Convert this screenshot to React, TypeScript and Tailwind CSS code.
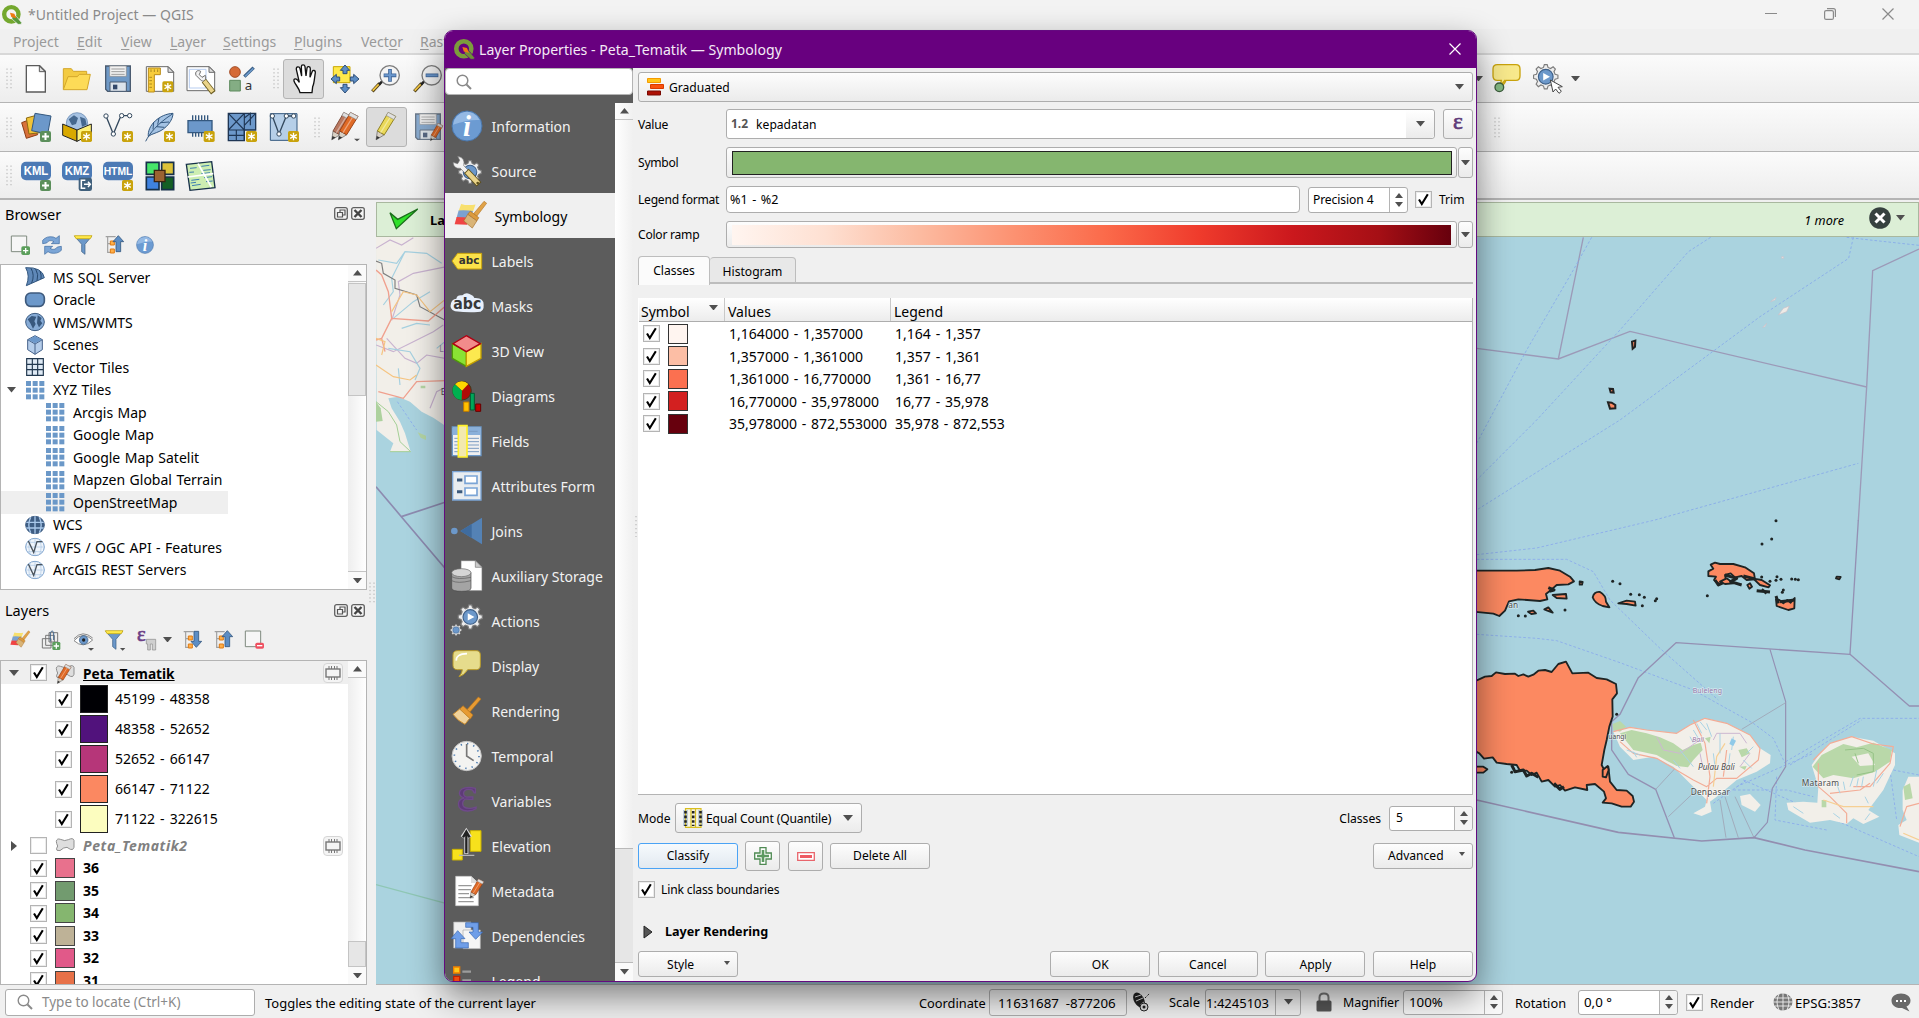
import React from "react";

type P = { children?: React.ReactNode; className?: string };

/* ---------- small shared pieces ---------- */

const Svg = ({ children, s = 30, v = 90 }: { children: React.ReactNode; s?: number; v?: number }) => (
  <svg width={s} height={s} viewBox={`0 0 ${v} ${v}`} className="shrink-0 overflow-visible">
    {children}
  </svg>
);

const Caret = ({ w = 8, up = false, className = "" }: { w?: number; up?: boolean; className?: string }) => (
  <svg width={w} height={w / 2 + 1} viewBox="0 0 8 5" preserveAspectRatio="none" className={`shrink-0 ${className}`}>
    <path d={up ? "M4 0L8 5H0z" : "M0 0H8L4 5z"} fill="#505050" />
  </svg>
);

const Check = ({ on = true, className = "" }: { on?: boolean; className?: string }) => (
  <span className={`flex h-[17px] w-[17px] shrink-0 items-center justify-center border border-[#b4b4b4] bg-white shadow-[inset_0_0_0_1px_#ececec] ${className}`}>
    {on && (
      <svg width="11" height="13" viewBox="0 0 11 13">
        <path d="M1 6.5L3.8 11 9.8 1.2" fill="none" stroke="#000" strokeWidth="2.1" />
      </svg>
    )}
  </span>
);

const Grip = ({ className = "" }: { className?: string }) => (
  <svg width="6" height="21" viewBox="0 0 6 21" className={`shrink-0 ${className}`}>
    <path d="M1 .5V21M5 .5V21" stroke="#b0b0b0" strokeDasharray="1.3 2.4" />
  </svg>
);

const Star = ({ x = 62, y = 62 }: { x?: number; y?: number }) => (
  <g transform={`translate(${x} ${y})`}>
    <rect x="-5" y="-5" width="33" height="33" rx="5" fill="#c9a30c" />
    <path d="M11.500 0V23M1.500 5.700L21.500 17.300M21.500 5.700L1.500 17.300" stroke="#fff" strokeWidth="4" />
  </g>
);

const Plus = ({ x = 62, y = 62 }: { x?: number; y?: number }) => (
  <g transform={`translate(${x} ${y})`}>
    <rect x="-5" y="-5" width="33" height="33" rx="6" fill="#5b8f5b" />
    <path d="M11.500 1V22M1 11.500H22" stroke="#fff" strokeWidth="6" />
  </g>
);

const QLogo = ({ s = 20, dim = false }: { s?: number; dim?: boolean }) => (
  <svg width={s} height={s} viewBox="0 0 60 60" className="shrink-0">
    <circle cx="28" cy="28" r="21.500" fill="none" stroke={dim ? "#7c9c3c" : "#74a82e"} strokeWidth="13" />
    <path d="M30 30L43 34L58 52V58H48L30 42z" fill={dim ? "#6f9136" : "#58983a"} stroke={dim ? "#680081" : "#f3f3f3"} strokeWidth="2" />
    <path d="M24 23L37 26L43 40L28 36z" fill="#ee7913" />
  </svg>
);

const Tip = () => (
  <>
    <path d="M4 82L26 58" stroke="#54431a" strokeWidth="10" />
    <path d="M5 80L24 60" stroke="#f5c945" strokeWidth="5" />
    <path d="M24 62L36 50" stroke="#222" strokeWidth="8" />
  </>
);

const Brush = () => (
  <>
    <path d="M22 12Q40 18 66 14L58 36L14 34z" fill="#f8e06e" />
    <path d="M14 32Q36 30 58 34L50 56L8 54z" fill="#7ba1d0" />
    <path d="M8 52Q28 52 46 54L40 76L2 74z" fill="#ef4444" />
    <path d="M60 42L92 4l8 6-32 42z" fill="#e0a247" stroke="#b5792a" strokeWidth="2" />
    <path d="M50 34l26 20-6 10-28-20z" fill="#dc9a3c" stroke="#a8702b" strokeWidth="2" />
    <path d="M42 44l28 20-14 22L30 64z" fill="#d9b477" stroke="#a8702b" strokeWidth="2" />
  </>
);

const Grid9 = () => (
  <svg width="20" height="20" viewBox="0 0 60 60" className="shrink-0">
    {[3, 23, 43].map((y) =>
      [3, 23, 43].map((x) => <rect key={`${x}-${y}`} x={x} y={y} width="15" height="15" fill="#6b98c8" />)
    )}
  </svg>
);

const Globe = ({ dark = false, v = false }: { dark?: boolean; v?: boolean }) => (
  <svg width="20" height="20" viewBox="0 0 60 60" className="shrink-0">
    <ellipse cx="30" cy="30" rx="28" ry="26" fill={dark ? "#3e5d83" : v ? "#f0f5fb" : "#86abd6"} stroke={v ? "#7ba1cc" : "#3e5d83"} strokeWidth="3" />
    {dark ? (
      <path d="M30 4V56M4 22H56M4 39H56M17 7Q6 30 17 53M43 7Q54 30 43 53" stroke="#a9c8ea" strokeWidth="4" fill="none" />
    ) : v ? (
      <>
        <path d="M30 4V56M4 30H56M8 44H52M8 16H52M17 7Q6 30 17 53M43 7Q54 30 43 53" stroke="#a9c5e4" strokeWidth="2" fill="none" />
        <path d="M10 12L26 46L36 14H52" stroke="#4a535c" strokeWidth="4" fill="none" />
      </>
    ) : (
      <path d="M8 22l12-10 14 2-6 14 4 8-8 14-8-16zM38 10l12 8-4 8 6 8-10 12-6-12z" fill="#38587e" />
    )}
  </svg>
);

/* ---------- toolbar icons ---------- */

const NewI = () => <Svg><path d="M16 5H56L73 22V84H16z" fill="#fff" stroke="#5a5a5a" strokeWidth="4" /><path d="M55 6V23H72z" fill="#ddd" stroke="#5a5a5a" strokeWidth="3" /></Svg>;
const OpenI = () => <Svg><path d="M4 76V14H28L34 22H74V32" fill="#f3cb42" stroke="#d3a72a" strokeWidth="3" /><path d="M4 77L18 38H46L52 31H85L75 77z" fill="#fddb57" stroke="#d3a72a" strokeWidth="3" /></Svg>;
const Floppy = () => (
  <>
    <path d="M8 6H82V82H14L8 76z" fill="#6f99c6" stroke="#4a5b70" strokeWidth="4" />
    <path d="M20 6H70V37H20z" fill="#f2f2f2" stroke="#8a8a8a" strokeWidth="2" />
    <path d="M25 15H65M25 23H65M25 31H65" stroke="#9c9c9c" strokeWidth="3" />
    <path d="M21 54H70V82H21z" fill="#dce3ea" stroke="#4a5b70" strokeWidth="3" />
    <path d="M30 62H43V76H30z" fill="#35496a" />
  </>
);
const SaveI = () => <Svg><Floppy /></Svg>;
const LayoutNewI = () => (
  <Svg>
    <path d="M4 8H70L86 24V82H4z" fill="#fff" stroke="#6a6a6a" strokeWidth="3" />
    <path d="M69 8V25H86z" fill="#ddd" stroke="#6a6a6a" strokeWidth="3" />
    <path d="M10 12H46V32H28V84H10z" fill="#f7cc3a" stroke="#b98b18" strokeWidth="3" />
    <path d="M18 16V24M28 16V24M38 16V24M13 40H21M13 50H21M13 60H21M13 70H21" stroke="#8a6914" strokeWidth="2" />
    <Star x={57} y={57} />
  </Svg>
);
const Wrench = () => (
  <>
    <path d="M30 34C26 24 34 16 44 22L40 32L48 40L58 34C62 46 56 54 46 50z" fill="#f2f2f2" stroke="#6d6d6d" strokeWidth="3" />
    <path d="M54 50L82 86" stroke="#6b5c20" strokeWidth="17" />
    <path d="M55 51L80 83" stroke="#ead48a" strokeWidth="12" />
  </>
);
const LayoutMgrI = () => (
  <Svg>
    <path d="M3 8H70L86 24V80H3z" fill="#fff" stroke="#6a6a6a" strokeWidth="3" />
    <path d="M69 8V25H86z" fill="#ddd" stroke="#6a6a6a" strokeWidth="3" />
    <path d="M10 16H60V72H10z" fill="none" stroke="#b7cdf0" strokeWidth="3" />
    <Wrench />
  </Svg>
);
const StyleI = () => (
  <Svg>
    <circle cx="24" cy="24" r="16" fill="#d56a36" stroke="#a34a22" strokeWidth="3" />
    <path d="M52 38L80 11" stroke="#34587f" strokeWidth="10" />
    <path d="M54 37L79 13" stroke="#6b98c8" strokeWidth="5" />
    <path d="M8 49H40V81H8z" fill="#84ad84" stroke="#5d8a5d" strokeWidth="3" />
    <text x="53" y="78" fontSize="40" fontFamily="Noto Sans" fill="#333">a</text>
  </Svg>
);
const HandI = () => (
  <Svg>
    <path d="M33 86C31 72 18 62 15 51C13 43 22 42 28 51L31 55L22 16C21 7 31 6 33 14L38 36L37 8C37 1 47 1 48 8L51 36L54 12C55 6 64 7 64 14L63 40L70 22C72 17 80 19 79 26C76 44 76 58 71 68L69 86z" fill="#fff" stroke="#111" strokeWidth="4" />
  </Svg>
);
const A4 = "M0 -42L-14 -26H-6V-16H6V-26H14z";
const PanSelI = () => (
  <Svg>
    <path d="M10 8H60V56H10z" fill="#ffe94a" stroke="#c9a800" strokeWidth="3" />
    {[0, 90, 180, 270].map((r) => (
      <path key={r} d={A4} transform={`translate(45 45) rotate(${r})`} fill="#5c8dc4" stroke="#2f4f78" strokeWidth="3" />
    ))}
  </Svg>
);
const ZoomI = ({ plus = false }: { plus?: boolean }) => (
  <Svg>
    <Tip />
    <circle cx="56" cy="34" r="29" fill="#f4f4f4" stroke="#7d7d7d" strokeWidth="4" />
    <path d={plus ? "M38 34H76M57 15V53" : "M38 34H76"} stroke="#3f6597" strokeWidth="11" />
    <path d={plus ? "M40 34H74M57 17V51" : "M40 34H74"} stroke="#6a97cd" strokeWidth="6" />
  </Svg>
);
const AddLayerI = () => (
  <Svg>
    <path d="M2 32L28 22L50 68L16 79z" fill="#d8713a" stroke="#8c3d15" strokeWidth="3" />
    <path d="M16 18L46 10L58 62L24 66z" fill="#f1c338" stroke="#8c6a10" strokeWidth="3" />
    <path d="M42 4L90 12L80 66L32 56z" fill="#6c98ca" stroke="#34587f" strokeWidth="3" />
    <Plus />
  </Svg>
);
const PackI = () => (
  <Svg>
    <circle cx="45" cy="34" r="32" fill="#a6c2e2" stroke="#5a7faa" strokeWidth="2" />
    <path d="M20 22L36 10L48 18L42 36L30 40zM54 14L70 20L74 38L60 44z" fill="#45688f" />
    <path d="M2 36L45 54V88L2 70z" fill="#d9a900" stroke="#222" strokeWidth="3" />
    <path d="M45 54L88 36V66L45 88z" fill="#fff27a" stroke="#222" strokeWidth="3" />
    <Star />
  </Svg>
);
const VShape = ({ box = false }: { box?: boolean }) => (
  <Svg>
    {box && <path d="M4 5H84V85H4z" fill="#b6cfe8" stroke="#34587f" strokeWidth="3" />}
    <path d={box ? "M10 12L30 66L52 12H74" : "M9 12L31 66L54 11H80"} fill="none" stroke="#34495e" strokeWidth="4" />
    {(box ? [[10, 12], [30, 66], [52, 12], [74, 12]] : [[9, 12], [31, 66], [56, 11], [80, 11]]).map(([x, y]) => (
      <circle key={`${x}-${y}`} cx={x} cy={y} r="6.500" fill="#fff" stroke="#34495e" strokeWidth="3" />
    ))}
    <Star />
  </Svg>
);
const FeatherI = () => (
  <Svg>
    <path d="M10 74C6 40 44 6 84 4C84 24 64 52 34 62C24 66 16 68 10 74z" fill="#a4c3e4" stroke="#34587f" strokeWidth="3" />
    <path d="M2 88C14 64 36 36 82 6M24 52L26 30M38 38L42 18M34 44L58 46M46 32L72 30" stroke="#34587f" strokeWidth="3" fill="none" />
    <Star />
  </Svg>
);
const Chip = () => (
  <Svg>
    <path d="M20 10V26M29 10V26M38 10V26M47 10V26M56 10V26M65 10V26M20 60V74M29 60V74M38 60V74M47 60V74" stroke="#34587f" strokeWidth="4" />
    <path d="M6 26H78V62H6z" fill="#6c98ca" stroke="#34587f" strokeWidth="4" />
    <Star x={58} />
  </Svg>
);
const MeshI = () => (
  <Svg>
    <path d="M4 4H86V54H52V86H4z" fill="#6c98ca" stroke="#1f3654" strokeWidth="4" />
    <path d="M4 4L52 54M52 4L4 54M52 4V86M86 4L52 40M4 54H52M52 18L70 4V40M4 70H52M28 54V86" stroke="#1f3654" strokeWidth="3.500" fill="none" />
    <Star />
  </Svg>
);
const Pencil = ({ c, d, x = 0, y = 0, k = 1 }: { c: string; d: string; x?: number; y?: number; k?: number }) => (
  <g transform={`translate(${x} ${y}) scale(${k})`}>
    <path d="M18 62L14 90L40 74z" fill="#d8d0c4" stroke="#555" strokeWidth="2" />
    <path d="M16 78L14 90L26 83z" fill="#333" />
    <path d="M18 62L52 4L76 16L40 74z" fill={c} stroke={d} strokeWidth="3" />
    <path d="M28 68L64 10" stroke="#fff" strokeOpacity=".4" strokeWidth="4" />
    <path d="M46 13L52 3L76 16L70 26z" fill="#e0e0e0" stroke="#8a8a8a" strokeWidth="2" />
  </g>
);
const PencilsI = () => <Svg><Pencil c="#b97860" d="#7d4a38" x={-8} y={-2} k={0.95} /><Pencil c="#e06a26" d="#974014" x={12} y={-2} k={0.95} /><path d="M72 80H90L81 88z" fill="#505050" /></Svg>;
const EditI = () => <Svg><Pencil c="#ead95a" d="#8c7c1c" x={2} y={-2} k={0.95} /></Svg>;
const SaveEditI = () => <Svg><g opacity=".8"><Floppy /></g><Pencil c="#e06a26" d="#974014" x={44} y={32} k={0.6} /></Svg>;
const TagI = ({ t, b }: { t: string; b: React.ReactNode }) => (
  <Svg>
    <rect x="0" y="2" width="90" height="56" rx="15" fill="#4c7ab5" />
    <text x="45" y="42" fontSize={t.length > 3 ? 33 : 36} textLength={t.length > 3 ? 86 : 74} lengthAdjust="spacingAndGlyphs" textAnchor="middle" fontWeight="bold" fontFamily="Liberation Sans" fill="#fff">{t}</text>
    {b}
  </Svg>
);
const ExportBadge = () => (
  <g>
    <rect x="50" y="50" width="40" height="40" rx="7" fill="#40607c" />
    <path d="M70 58H58V82H70M66 70H84M78 62L85 70L78 78" stroke="#fff" strokeWidth="4.500" fill="none" />
  </g>
);
const SquaresI = () => (
  <Svg>
    <path d="M4 4H42V40H4z" fill="#46e56a" stroke="#16304a" strokeWidth="5" />
    <path d="M50 4H86V40H50z" fill="#dcc238" stroke="#16304a" strokeWidth="5" />
    <path d="M4 48H42V86H4z" fill="#3f82e0" stroke="#16304a" strokeWidth="5" />
    <path d="M50 48H86V86H50z" fill="#145f25" stroke="#16304a" strokeWidth="5" />
    <path d="M28 28H60V62H28z" fill="#9a6232" stroke="#3a2412" strokeWidth="4" />
  </Svg>
);
const MapI = () => (
  <Svg>
    <path d="M1 10L77 2L87 80L12 88z" fill="#cdeeb2" stroke="#16304a" strokeWidth="4" />
    <path d="M12 22L32 20M46 16L70 13M10 34L24 33M52 28L74 26M16 58L40 55M54 50L78 47M18 74L44 70M60 62L80 60M14 66L30 64M46 38L72 35" stroke="#3f7fb0" strokeWidth="3" />
    <path d="M5 48L82 38M36 8L76 78" stroke="#fff" strokeWidth="5" />
  </Svg>
);
const gearPath = "M40 2H50L53 12L62 16L71 10L79 18L74 27L78 36L88 39V51L78 54L74 62L79 71L71 80L62 74L53 78L50 88H40L37 78L28 74L19 80L11 71L16 62L12 54L2 51V39L12 36L16 27L11 18L19 10L28 16L37 12z";
const Gear = ({ x = 0, y = 0, k = 1, play = true }: { x?: number; y?: number; k?: number; play?: boolean }) => (
  <g transform={`translate(${x} ${y}) scale(${k})`}>
    <path d={gearPath} fill="#ededed" stroke="#7c7c7c" strokeWidth="4" />
    <circle cx="45" cy="45" r="26" fill="#6c98ca" stroke="#3d5f88" strokeWidth="4" />
    {play && <path d="M36 32L60 45L36 58z" fill="#fff" />}
  </g>
);
const Bubble = () => <path d="M16 2H72Q84 2 84 15V36Q84 49 72 49H42Q36 66 20 70Q28 60 28 49H16Q3 49 3 36V15Q3 2 16 2z" fill="#f8e98c" stroke="#c9a30c" strokeWidth="4" />;

/* ---------- panel icons ---------- */

const RefreshI = () => <Svg s={20} v={60}><path d="M2 26V16Q14 2 34 6L42 10L52 2V26H28L36 20Q22 12 14 24z" fill="#7ba5d6" stroke="#3a689e" strokeWidth="2" /><path d="M58 34V46Q46 58 26 54L18 50L8 58V34H32L24 40Q38 48 46 36z" fill="#7ba5d6" stroke="#3a689e" strokeWidth="2" /></Svg>;
const FilterI = ({ caret = false }: { caret?: boolean }) => <Svg s={20} v={60}><path d="M5 4H56L36 28V58L26 50V28z" fill="#6c98ca" stroke="#34587f" strokeWidth="2" /><path d="M4 2H57L52 11H9z" fill="#ffe94a" stroke="#c9a800" strokeWidth="2" />{caret && <path d="M48 54H64L56 62z" fill="#505050" />}</Svg>;
const CollapseI = ({ down = false }: { down?: boolean }) => (
  <Svg s={20} v={60}>
    <path d="M2 5H32M8 5V52H20M8 26H20" stroke="#a0a0a0" strokeWidth="3.500" fill="none" />
    <path d="M16 18H28V30H16zM16 42H28V54H16z" fill="#ffb04a" stroke="#e07b12" strokeWidth="3" />
    <path d="M40 2L56 20H47V50H33V20H24z" transform={down ? "rotate(180 40 27)" : ""} fill="#5c8dc4" stroke="#34587f" strokeWidth="2.500" />
  </Svg>
);
const InfoI = ({ s = 18 }: { s?: number }) => (
  <Svg s={s} v={96}>
    <circle cx="48" cy="48" r="45" fill="#6c9bd2" stroke="#4a76aa" strokeWidth="3" />
    <path d="M6 44A42 42 0 0 1 86 30Q50 28 6 44z" fill="#9fc0e8" opacity=".8" />
    <text x="48" y="78" fontSize="86" textAnchor="middle" fontStyle="italic" fontWeight="bold" fontFamily="Liberation Serif" fill="#fff">i</text>
  </Svg>
);
const SquareBadge = ({ minus = false }: { minus?: boolean }) => (
  <Svg s={20} v={60}>
    <path d="M4 3H50V50H4z" fill="#f6f6f6" stroke="#7f8a7f" strokeWidth="3" />
    {minus ? <><rect x="34" y="38" width="26" height="18" rx="5" fill="#ef5060" /><path d="M39 47H55" stroke="#fff" strokeWidth="4" /></> : <><rect x="34" y="34" width="26" height="26" rx="5" fill="#5b9f5b" /><path d="M39 47H55M47 39V55" stroke="#fff" strokeWidth="4" /></>}
  </Svg>
);
const ChipButton = () => (
  <span className="flex h-5 w-5 shrink-0 items-center justify-center rounded-sm border border-[#d6d6d6] bg-[#f4f4f4]">
    <svg width="16" height="14" viewBox="0 0 16 14">
      <path d="M4 0V14M6.500 0V14M9.500 0V14M12 0V14" stroke="#777" />
      <rect x="1" y="3" width="14" height="8" fill="#f4f4f4" stroke="#777" strokeWidth="1.400" />
    </svg>
  </span>
);
const DockButtons = () => (
  <span className="flex gap-[3px]">
    <svg width="14" height="13" viewBox="0 0 14 13"><rect x=".7" y=".7" width="12.600" height="11.600" rx="2" fill="#f5f5f5" stroke="#5f5f5f" strokeWidth="1.300" /><path d="M3.500 5.500H8.500V10H3.500zM6 5V3H11V8H9" fill="none" stroke="#555" strokeWidth="1.200" /></svg>
    <svg width="14" height="13" viewBox="0 0 14 13"><rect x=".7" y=".7" width="12.600" height="11.600" rx="2" fill="#f5f5f5" stroke="#5f5f5f" strokeWidth="1.300" /><path d="M3.500 3L10.500 10M10.500 3L3.500 10" stroke="#444" strokeWidth="2.400" /></svg>
  </span>
);

/* ---------- map ---------- */

const THIRD = "scale(.33333)";
const dots = [
  [458, 184], [480, 191], [512, 223], [538, 224], [553, 232], [547, 257], [175, 287], [196, 288], [315, 270], [742, 227],
  [906, 72], [935, 57], [948, 2], [905, 171], [930, 184], [948, 181], [951, 170], [963, 178], [970, 210], [967, 217], [995, 177], [1006, 178], [1015, 179], [470, 583], [590, 236], [586, 242], [155, 757],
];
const MapCanvas = () => (
  <svg viewBox="376 237 1543 747" preserveAspectRatio="none" className="min-h-0 w-full flex-1 bg-[#aad3df]">
    <g transform={`translate(0 195) ${THIRD}`}>
      <path d="M1128 126H1340V695L1300 668L1265 650L1230 620L1195 605L1165 610L1175 640L1200 680L1215 715L1232 770H1170L1180 745L1130 705z" fill="#f2efe9" />
      <path d="M1128 620L1142 640L1148 678L1128 680z" fill="#add19e" />
      <path d="M1253 712L1278 722V735L1262 728zM1262 572h14v8h-14z" fill="#b5d6a5" />
      <path d="M1128 160L1170 135L1205 150L1240 128M1175 376L1200 300L1195 260L1240 235L1340 215M1128 450L1180 470L1240 440L1300 410L1330 390M1160 430L1215 490L1250 505L1280 480L1335 490M1290 640L1310 590L1340 575" fill="none" stroke="#c9b3d0" strokeWidth="3.500" />
      <path d="M1135 195L1190 205L1215 170L1280 175L1325 205M1215 170L1175 250L1180 290L1150 330M1180 370L1240 320L1290 290M1205 400L1250 385L1290 390M1165 460L1230 470L1260 520L1245 555M1195 520L1200 570M1310 460L1335 440" fill="none" stroke="#a5d0e0" strokeWidth="3.500" />
      <path d="M1128 198L1145 205L1150 235L1185 255V280L1250 300L1260 335L1340 378" fill="none" stroke="#7f7f7f" strokeWidth="3.500" />
      <path d="M1128 225L1145 240L1165 290L1175 370L1285 378L1340 330M1175 370L1145 430L1128 435M1135 590L1210 610L1250 560L1340 557M1145 430L1155 470" fill="none" stroke="#f0a08e" strokeWidth="4" />
      <path d="M1128 510L1180 545L1230 555L1250 540M1175 350L1210 290L1250 300L1290 350L1340 310M1128 430L1155 440L1145 480" fill="none" stroke="#f5c481" strokeWidth="3.500" />
      <path d="M1128 620L1165 650L1190 690L1200 740L1232 770H1170" fill="none" stroke="#a3cf95" strokeWidth="3" />
      <path d="M1192 620L1250 705" stroke="#8fb2ea" strokeWidth="3" strokeDasharray="8 6" />
      <path d="M1128 875L1204 965L1335 1120M1204 965L1335 922" fill="none" stroke="#8d8bb0" strokeWidth="5" />
      <path d="M1128 2069L1340 2126" stroke="#8fc7b4" strokeWidth="4" />
      <text x="1318" y="470" fontSize="26" fontFamily="Noto Sans" fill="#9a86a8">L</text>
      <text x="1322" y="600" fontSize="26" fontFamily="Noto Sans" fill="#555">E</text>
    </g>
    <g transform={`translate(1460 0) ${THIRD}`} fill="none">
      <path d="M370 712L295 1077M50 1045L295 1077L510 994L1220 1161M1377 747L1238 812L1220 1161L1195 1562" stroke="#9c9ab8" strokeWidth="4" />
      <path d="M395 712L340 810L200 1050L50 1330M752 712L685 755L480 990L230 1260L50 1440M1180 712L1166 775L900 950L480 1260L50 1530M1160 712L1230 720L1377 736M585 1560L1195 1390" stroke="#8cb0e8" strokeWidth="3" strokeDasharray="8 6" />
      <path d="M955 945L970 925L988 918L980 935zM932 905L948 892L945 900zM908 982L920 970L915 980zM965 770h6v5h-6z" fill="#eeebe6" stroke="#c7c0c8" strokeWidth="2" />
      <path d="M516 1025L526 1022L525 1040L518 1046zM449 1166L459 1167L461 1178L452 1177zM444 1207L455 1208L466 1215V1225L450 1226z" fill="#fc8961" stroke="#222" strokeWidth="6" />
    </g>
    <g transform={`translate(1460 520) ${THIRD}`} fill="none" strokeLinejoin="round">
      <path d="M50 104L230 84L585 0M50 118H320L400 155L450 240L600 385L775 540M50 343L230 355L290 362L480 428L700 510L880 610L940 655L975 730M977 725L1200 595H1377M990 735L1205 600M830 800L977 735L1060 700M850 780L1377 1010M820 810H980L1060 830M950 770L945 900L1100 930M1290 750L1310 900M1300 750L1377 765M760 850L860 780" stroke="#8fb0ea" strokeWidth="3" strokeDasharray="8 6" />
      <path d="M1195 0L1170 403L1348 558H1377M1170 403L648 368L535 473L480 583L455 605V690L505 763L587 808L643 953" stroke="#9490b3" strokeWidth="4" />
      <path d="M930 388L977 545V740L937 805L922 907L882 953" stroke="#9490b3" strokeWidth="3.500" />
      <path d="M977 548L845 628M587 808L650 740M625 890L720 800M780 840L798 953M795 830L835 953M825 830L882 953" stroke="#9fa3b4" strokeWidth="2.500" />
      <path d="M50 840L475 937L725 963L882 953L1035 990L1377 1055" stroke="#938eb0" strokeWidth="5" />
      {/* Bali, Lombok and Sumbawa */}
      <path d="M460 635L510 622L560 630L650 640L690 615L735 595L800 610L870 645L900 685L932 705L930 730L890 755L830 780L770 830L750 845L755 875L725 888L700 880L735 860L740 840L700 800L640 740L580 710L520 720L480 680z" fill="#f2efe9" />
      <path d="M840 828L870 822L902 855L885 875L845 855z" fill="#f2efe9" />
      <path d="M1055 735L1080 700L1110 670L1175 650L1240 662L1305 700V735L1270 810L1225 870L1258 890L1210 912L1180 895L1160 912L1110 900L1050 908L985 870L980 848L1030 845L1072 848L1075 800z" fill="#f2efe9" />
      <path d="M1377 770H1345L1328 810V870L1340 900L1315 915L1318 945L1377 968z" fill="#f2efe9" />
      <path d="M458 612L480 603L498 620L480 635L460 630zM480 640L515 630L560 640L600 652L640 670L668 690L700 675L722 668L728 690L700 720L684 742L650 738L620 722L590 705L520 690zM735 655L752 650L748 670zM835 690L860 685L870 700L845 712zM838 740L860 738L855 750z" fill="#b9d8a9" />
      <path d="M1058 740L1085 705L1150 672L1190 682L1240 668L1295 690L1290 725L1245 755L1180 775L1120 765L1090 775zM1330 800L1350 790L1358 835L1335 840zM1085 840h14v22h-14z" fill="#b9d8a9" />
      <path d="M1175 710L1225 700L1245 735L1200 738z" fill="#f2efe9" />
      <path d="M460 635L510 622L560 630L650 640L690 615L735 595L800 610L870 645L900 685L895 720L830 775L770 775L740 800L700 780L590 715L520 700L480 665M700 600L735 670L750 770L740 850M800 690L790 770M1060 720L1110 670L1175 650L1240 672L1300 680L1290 730L1230 800L1180 800M1075 730V800L1110 830L1160 880V910M1110 820L1200 810L1230 790M1377 850L1340 860L1320 920" stroke="#f3ac96" strokeWidth="3.500" />
      <path d="M760 800L770 710L795 670M1090 840L1150 860L1240 860M1330 940L1377 960" stroke="#f6cf93" strokeWidth="3.500" />
      <path d="M590 650L610 690L660 700L720 660M760 660L770 640L840 640L860 670M720 700L730 750M840 740L870 700" stroke="#cdb7d2" strokeWidth="3" />
      <path d="M710 610L725 640M740 610L755 650M720 605L740 630M700 630L715 655M690 650L700 670M780 640V700M810 700L805 740M850 720L875 745M880 680L860 700M660 690L700 740M640 720L660 745M500 690L540 705M520 695L530 712M760 700L765 740M820 650L815 690M1180 770L1170 800M1195 775L1190 800M1210 770L1205 800M1250 750L1240 800M1130 790L1140 820M1150 785L1155 810M1270 760L1250 790M1215 830L1225 850M1000 860L1030 880M1120 880L1140 895M1230 880L1215 900" stroke="#a9d3e4" strokeWidth="3" />
      <path d="M815 655L828 662L820 678L808 672z" fill="#8fc9e8" />
      <path d="M1155 690L1210 685L1240 700V755L1190 765M1185 700L1195 730" stroke="#95c386" strokeWidth="3" />
      {/* thematic polygons */}
      <g fill="#fc8961" stroke="#1e2424" strokeWidth="5.500">
        <path d="M40 152H105L170 152L225 150L265 144L300 152L330 170L342 184L325 193L290 195L275 208L258 222L262 238L240 243L175 238L147 244L135 272L118 288L100 281L40 275z" />
        <path d="M40 486L62 476L75 470L95 468L108 457L135 462L165 461L175 468L190 463L205 470L220 464L235 452L255 450L275 456L295 432L318 425L337 460L385 458L410 474L440 478L468 492L471 520L457 538L458 590L448 620L440 660L433 690L425 735L438 760L445 740L450 785L470 810L500 812L518 828L522 845L512 860L485 860L455 850L428 848L438 835L432 815L405 792L380 795L382 810L345 802L315 812L300 795L285 800L265 780L245 785L230 758L215 765L200 752L180 752L170 735L140 732L110 728L98 712L72 716L58 700L40 690z" />
        <path d="M40 740H70L82 748L70 758H40zM428 770V750L443 738L446 750L438 772z" />
        <path d="M278 225L318 222L320 236L290 234zM398 232Q402 214 420 216Q438 226 438 245L448 262L428 258Q404 250 398 232zM475 250L500 242L525 245L527 257L500 252zM253 268L265 262L278 278L262 272zM204 275L220 272L228 280L214 282zM359 184L368 186L366 194H359zM1130 170L1142 171L1138 178L1128 175z" />
        <path d="M752 134L765 128L780 132L820 132L855 142L882 160L885 178L860 180L845 168L825 172L812 160L795 165L798 180L778 192L762 180L768 170L745 168V154L760 146z" />
        <path d="M780 185L800 175L820 190L795 192zM880 176L905 180L930 196L926 202L900 195zM862 195L870 190L876 200L868 206zM948 238L958 240L970 250L982 240L992 248L1004 234L1003 265L985 270L950 258z" />
      </g>
      <path d="M765 180L775 195L790 188M795 165L830 175L812 185L845 195M850 168L882 176M890 212L930 216M905 208L920 220M948 228L955 250M960 245L1004 240M265 203L282 210L268 214M155 735L165 755L190 750L200 768L215 760L235 772M282 790L300 808L312 800" stroke="#1e2424" strokeWidth="9" />
      {dots.map(([x, y], i) => <circle key={i} cx={x} cy={y} r="4.500" fill="#1e2424" />)}
      <g fontFamily="Noto Sans" fontSize="25" fill="#4d4d4d" paintOrder="stroke" stroke="#fff" strokeOpacity=".5" strokeWidth="4">
        <text x="698" y="519" fontSize="21" fill="#9878a8" textLength="88">Buleleng</text>
        <text x="696" y="666" fontSize="21" fill="#9878a8" fontStyle="italic">Bali</text>
        <text x="714" y="749" fontStyle="italic" textLength="110">Pulau Bali</text>
        <text x="692" y="824" textLength="118">Denpasar</text>
        <text x="1025" y="798" textLength="112">Mataram</text>
        <text x="445" y="656" fontSize="20">uangi</text>
        <text x="145" y="263">an</text>
      </g>
    </g>
  </svg>
);

/* ---------- docks ---------- */

const ScrollBar = ({ children }: P) => (
  <div className="flex w-[18px] shrink-0 flex-col bg-gradient-to-r from-[#eeeeee] to-white">
    <div className="flex h-[17px] items-center justify-center border-b border-[#c4c4c4] bg-[#fafafa]"><Caret up w={9} /></div>
    {children}
    <div className="flex h-[18px] items-center justify-center border-t border-[#c4c4c4] bg-[#fafafa]"><Caret w={9} /></div>
  </div>
);

const TreeRow = ({ icon, t, lvl = 0, sel = false, open = false }: { icon: React.ReactNode; t: string; lvl?: number; sel?: boolean; open?: boolean }) => (
  <div className={`flex h-[22.5px] shrink-0 items-center ${sel ? "w-[227px] bg-[#efefef]" : ""}`}>
    <span className={`flex shrink-0 items-center justify-center ${lvl ? "w-[44px]" : "w-6"}`}>{open && <Caret w={9} className="mr-1" />}</span>
    {icon}
    <span className="ml-[8px] pt-px whitespace-nowrap [word-spacing:0.8px]">{t}</span>
  </div>
);

const Browser = () => (
  <>
    <div className="flex h-[27px] items-center justify-between pr-[2px] pl-[5px] text-[14.500px]"><span>Browser</span><DockButtons /></div>
    <div className="flex h-[37px] items-center gap-[11.500px] pb-[2px] pl-[10px]"><SquareBadge /><RefreshI /><FilterI /><CollapseI /><InfoI /></div>
    <div className="flex h-[326px] border border-[#b4b4b4] bg-white">
      <div className="flex flex-1 flex-col overflow-hidden pt-px">
        <TreeRow t="MS SQL Server" icon={<Svg s={20} v={60}><path d="M2 2Q52 0 58 32L4 56Q16 26 2 2z" fill="#5f88b8" stroke="#34587f" strokeWidth="3" /><path d="M18 4Q30 24 20 48M32 6Q42 22 36 42M45 12Q50 24 48 36" stroke="#284a70" strokeWidth="3" fill="none" /></Svg>} />
        <TreeRow t="Oracle" icon={<Svg s={20} v={60}><rect x="2" y="9" width="56" height="40" rx="15" fill="#6c98ca" stroke="#3e5a7d" strokeWidth="5" /></Svg>} />
        <TreeRow t="WMS/WMTS" icon={<Globe />} />
        <TreeRow t="Scenes" icon={<Svg s={20} v={60}><path d="M30 2L52 14V44L30 58L8 44V14z" fill="#b5cdea" stroke="#46628a" strokeWidth="3" /><path d="M8 14L30 27L52 14M30 27V58" stroke="#46628a" strokeWidth="3" fill="none" /><path d="M30 3L50 14L30 25L10 14z" fill="#6c98ca" /></Svg>} />
        <TreeRow t="Vector Tiles" icon={<Svg s={20} v={60}><path d="M5 5H55V55H5zM5 22H55M5 38H55M22 5V55M38 5V55" fill="#dfeaf5" stroke="#22384f" strokeWidth="3.500" /></Svg>} />
        <TreeRow t="XYZ Tiles" icon={<Grid9 />} open />
        {["Arcgis Map", "Google Map", "Google Map Satelit", "Mapzen Global Terrain", "OpenStreetMap"].map((t) => (
          <TreeRow key={t} t={t} lvl={1} icon={<Grid9 />} sel={t === "OpenStreetMap"} />
        ))}
        <TreeRow t="WCS" icon={<Globe dark />} />
        <TreeRow t="WFS / OGC API - Features" icon={<Globe v />} />
        <TreeRow t="ArcGIS REST Servers" icon={<Globe v />} />
      </div>
      <ScrollBar>
        <div className="mt-px h-[113px] border border-[#c4c4c4] bg-[#e6e6e6]" />
        <div className="flex-1" />
      </ScrollBar>
    </div>
  </>
);

const ranges = [
  ["#000004", "45199 - 48358"], ["#51127c", "48358 - 52652"], ["#b63679", "52652 - 66147"], ["#fb8861", "66147 - 71122"], ["#fcfdbf", "71122 - 322615"],
];
const flat = [["#e8718d", "36"], ["#729b6f", "35"], ["#85b66f", "34"], ["#beb297", "33"], ["#e15989", "32"], ["#e77148", "31"]];

const Poly = () => <path d="M4 16Q6 6 16 10Q30 17 40 11Q54 4 57 13V34Q54 44 46 40Q36 30 26 36Q14 48 6 43Q2 40 8 30Q4 22 4 16z" fill="#dedede" stroke="#8f8f8f" strokeWidth="3" />;

const Layers = () => (
  <>
    <div className="mt-[7px] flex h-[26px] items-center justify-between pr-[2px] pl-[5px] text-[14.500px]"><span>Layers</span><DockButtons /></div>
    <div className="flex h-[37px] items-center pl-[10px] pb-1">
      <Svg s={20} v={100}><Brush /></Svg>
      <span className="ml-[11px]"><Svg s={20} v={60}><path d="M4 26H30V54H4zM14 16H40V46H14zM24 8H50V36H24z" fill="#eee" stroke="#777" strokeWidth="3" /><path d="M28 34V8Q34 -2 38 8V30" stroke="#44688f" strokeWidth="3" fill="none" /><rect x="34" y="36" width="24" height="24" rx="4" fill="#5b9f5b" /><path d="M38 48H54M46 40V56" stroke="#fff" strokeWidth="4" /></Svg></span>
      <span className="ml-[13px]"><Svg s={20} v={60}><path d="M0 32Q26 2 56 30Q28 58 0 32z" fill="#fff" stroke="#8a8a8a" strokeWidth="3" /><circle cx="29" cy="30" r="13" fill="#6c98ca" stroke="#34587f" strokeWidth="2" /><circle cx="29" cy="30" r="5" fill="#222" /><path d="M0 26Q26 -2 56 24" stroke="#8a8a8a" strokeWidth="3" fill="none" /><path d="M42 54H60L51 62z" fill="#505050" /></Svg></span>
      <span className="ml-[10px]"><FilterI caret /></span>
      <span className="ml-[13px]"><Svg s={20} v={60}><text x="0" y="34" fontSize="62" fontFamily="Liberation Serif" fill="#6b3f86" stroke="#6b3f86" strokeWidth="2">ε</text><path d="M28 28H56V60H46V42H40V60H32V42H28z" fill="#cfcfcf" stroke="#8a8a8a" strokeWidth="2" /></Svg></span>
      <Caret w={9} className="ml-[6px]" />
      <span className="ml-[11px]"><CollapseI down /></span>
      <span className="ml-[11px]"><CollapseI /></span>
      <span className="ml-[10px]"><SquareBadge minus /></span>
    </div>
    <div className="flex h-[325px] border border-[#b4b4b4] bg-white">
      <div className="flex flex-1 flex-col overflow-hidden">
        <div className="flex h-[23px] shrink-0 items-center bg-[#efefef] pl-2">
          <Caret w={10} className="mr-[11px]" />
          <Check className="mr-2" />
          <Svg s={20} v={60}><Poly /><Pencil c="#e06a26" d="#974014" x={-2} y={2} k={0.66} /></Svg>
          <b className="ml-2 flex-1 pt-[2px] text-[13.700px] underline">Peta_Tematik</b>
          <span className="mr-[5px]"><ChipButton /></span>
        </div>
        {ranges.map(([c, t]) => (
          <div key={t} className="flex h-[30px] shrink-0 items-center pl-[54px] [word-spacing:1.400px]">
            <Check />
            <span className="mr-[7px] ml-2 h-7 w-7 border border-[#222]" style={{ background: c }} />
            {t}
          </div>
        ))}
        <div className="flex h-[23px] shrink-0 items-center pl-[10px]">
          <svg width="6" height="10" viewBox="0 0 6 10" className="mr-[13px]"><path d="M0 0L6 5L0 10z" fill="#505050" /></svg>
          <Check on={false} className="mr-2" />
          <Svg s={20} v={60}><Poly /></Svg>
          <b className="ml-2 flex-1 tracking-[0.600px] text-[#808080] italic">Peta_Tematik2</b>
          <span className="mr-[5px]"><ChipButton /></span>
        </div>
        {flat.map(([c, t]) => (
          <div key={t} className="flex h-[22.5px] shrink-0 items-center pl-[29px]">
            <Check />
            <span className="mr-2 ml-2 h-5 w-5 border border-[#444]" style={{ background: c }} />
            <b>{t}</b>
          </div>
        ))}
      </div>
      <ScrollBar>
        <div className="flex-1" />
        <div className="h-[25px] border border-b-0 border-[#c4c4c4] bg-[#e6e6e6]" />
      </ScrollBar>
    </div>
  </>
);

/* ---------- dialog ---------- */

const Eps = ({ light = false }: { light?: boolean }) => (
  <text x="48" y="77" fontSize={light ? 150 : 140} textAnchor="middle" fontFamily="Liberation Serif" fill="#5e3a78" stroke={light ? "#6f4a8a" : "#5e3a78"} strokeWidth="4">ε</text>
);

const side: [string, React.ReactNode][] = [
  ["Information", <InfoI s={32} />],
  ["Source", <Svg s={32} v={96}><Gear x={22} y={16} k={0.78} play={false} /><path d="M6 22L20 26L26 16L20 4Q44 8 38 32L54 48L44 56L28 40Q8 42 6 22z" fill="#f2f2f2" stroke="#777" strokeWidth="2" /><path d="M46 48L84 88" stroke="#5e501b" strokeWidth="19" /><path d="M48 50L82 86" stroke="#ead48a" strokeWidth="14" /><circle cx="80" cy="84" r="4" fill="#5e501b" /></Svg>],
  ["Symbology", <Svg s={32} v={98}><Brush /></Svg>],
  ["Labels", <Svg s={32} v={96}><path d="M3 48L20 25H92V72H20z" fill="#fbe24a" stroke="#c9a30c" strokeWidth="3" /><text x="54" y="58" fontSize="33" textAnchor="middle" textLength="62" lengthAdjust="spacingAndGlyphs" fontWeight="bold" fontFamily="DejaVu Sans" fill="#333">abc</text></Svg>],
  ["Masks", <Svg s={32} v={96}><path d="M12 64Q-6 58 0 40Q2 28 16 26Q18 14 34 16Q46 4 60 14Q68 16 70 24Q98 22 98 44Q100 66 80 66Q50 68 12 64z" fill="#e8f0fc" /><text x="49" y="56" fontSize="46" textAnchor="middle" textLength="84" lengthAdjust="spacingAndGlyphs" fontWeight="bold" fontFamily="DejaVu Sans" fill="#383838">abc</text></Svg>],
  ["3D View", <Svg s={32} v={96}><path d="M4 26L46 50V94L4 70z" fill="#8ae234" stroke="#4e9a06" strokeWidth="4" /><path d="M90 26L46 50V94L90 70z" fill="#fce94f" stroke="#c4a000" strokeWidth="4" /><path d="M46 2L88 26L46 50L6 26z" fill="#f28b8b" stroke="#b00012" strokeWidth="4" /></Svg>],
  ["Diagrams", <Svg s={32} v={96}><circle cx="33" cy="32" r="28" fill="#b00c06" stroke="#3b3b1b" strokeWidth="3" /><path d="M33 32L12 13A28 28 0 0 1 52 12z" fill="#ffd700" /><path d="M33 32L12 13A28 28 0 0 0 32 60z" fill="#00b050" /><path d="M38 66H54V94H38z" fill="#ffc000" stroke="#c07a00" strokeWidth="3" /><path d="M58 40H70V90H58z" fill="#00a65a" stroke="#06592f" strokeWidth="3" /><path d="M74 72H89V94H74z" fill="#c00000" stroke="#600" strokeWidth="3" /></Svg>],
  ["Fields", <Svg s={32} v={96}><path d="M4 6H90V92H4z" fill="#f0f0f0" stroke="#6b98c8" strokeWidth="4" /><path d="M4 8H90V30H4z" fill="#8ab0da" /><path d="M10 40H84M10 50H84M10 60H84M10 70H84M10 80H84M54 19H80" stroke="#7b9cc2" strokeWidth="3" /><path d="M22 2H48V96H22z" fill="#f3e9ae" stroke="#fff02a" strokeWidth="5" /></Svg>],
  ["Attributes Form", <Svg s={32} v={96}><path d="M5 5H90V90H5z" fill="#e9edf0" stroke="#7ba5d6" strokeWidth="4" /><path d="M42 18H78V40H42zM42 54H78V76H42z" fill="#fff" stroke="#7ba5d6" strokeWidth="5" /><path d="M18 30H34M18 65H34" stroke="#3c5a7c" strokeWidth="9" /></Svg>],
  ["Joins", <Svg s={32} v={96}><circle cx="10" cy="48" r="10" fill="#6c98ca" /><path d="M28 48L93 8V88z" fill="#5482b5" /><path d="M28 48L62 27V69z" fill="#3f6c9f" /></Svg>],
  ["Auxiliary Storage", <Svg s={32} v={96}><path d="M30 2H74L93 21V92H30z" fill="#fff" stroke="#777" strokeWidth="2" /><path d="M73 2V22H93z" fill="#ccc" stroke="#777" strokeWidth="2" /><path d="M2 38V84Q2 94 32 94Q60 94 60 84V38z" fill="#a4a4a4" stroke="#4a4a4a" strokeWidth="2" /><ellipse cx="31" cy="38" rx="29" ry="12" fill="#d5d5d5" stroke="#666" strokeWidth="2" /><path d="M2 62Q20 72 60 62M2 50Q20 60 60 52" stroke="#5a5a5a" strokeWidth="2" fill="none" /></Svg>],
  ["Actions", <Svg s={32} v={96}><Gear x={20} y={-2} k={0.84} /><Gear x={-2} y={58} k={0.38} play={false} /></Svg>],
  ["Display", <Svg s={32} v={96}><g transform="translate(4 0)"><path d="M16 2H72Q84 2 84 15V46Q84 59 72 59H46Q36 76 20 80Q30 68 30 59H16Q2 59 2 46V15Q2 2 16 2z" fill="#e6dc8c" stroke="#b99a28" strokeWidth="3" /><path d="M12 32Q10 12 44 11" stroke="#fff" strokeWidth="5" fill="none" /></g></Svg>],
  ["Rendering", <Svg s={32} v={96}><path d="M48 44L82 6l8 6-34 40z" fill="#e79b33" stroke="#b5731a" strokeWidth="2" /><path d="M36 32l30 28-8 12-32-30z" fill="#e79b33" stroke="#b5731a" strokeWidth="2" /><path d="M26 42l30 28-14 18Q20 78 6 58z" fill="#f0d29b" stroke="#c98b2e" strokeWidth="3" /></Svg>],
  ["Temporal", <Svg s={32} v={96}><circle cx="47" cy="48" r="44" fill="#f3f3f1" stroke="#c4c4c4" strokeWidth="3" /><circle cx="47" cy="48" r="37" fill="none" stroke="#4a7ab0" strokeWidth="5" strokeDasharray="4 15.370" /><path d="M47 12V48L68 62" stroke="#777" strokeWidth="5" fill="none" /></Svg>],
  ["Variables", <Svg s={32} v={96}><Eps light /></Svg>],
  ["Elevation", <Svg s={32} v={96}><path d="M58 2H90V64H58zM4 58H34V90H4z" fill="#f7e11c" stroke="#c9b000" strokeWidth="3" /><path d="M46 72V12M34 22L46 4L58 22" stroke="#ddd" strokeWidth="12" fill="none" /><path d="M46 70V8M36 22L46 5L56 22" stroke="#222" strokeWidth="7" fill="none" /><path d="M24 76H70" stroke="#b5b5b5" strokeWidth="4" /></Svg>],
  ["Metadata", <Svg s={32} v={96}><path d="M14 4H60L82 24V92H14z" fill="#fff" stroke="#c7c7c7" strokeWidth="2" /><path d="M60 4V24H82z" fill="#ddd" /><path d="M22 32H62M22 44H60M22 56H54M22 68H68M22 80H68" stroke="#999" strokeWidth="3.500" /><Pencil c="#e06a26" d="#974014" x={48} y={10} k={0.66} /></Svg>],
  ["Dependencies", <Svg s={32} v={96}><path d="M8 6H60V84H8z" fill="#efefef" stroke="#aaa" strokeWidth="2" /><path d="M36 30H88V86H36z" fill="#f6f6f6" stroke="#aaa" strokeWidth="2" /><path d="M44 8H82V36H95L74 58L54 36H66V22H44z" fill="#6f9ee8" stroke="#3565b0" strokeWidth="2" /><path d="M52 84H14V56H0L20 32L42 56H30V68H52z" fill="#6f9ee8" stroke="#3565b0" strokeWidth="2" /></Svg>],
  ["Legend", <Svg s={32} v={96}><path d="M8 6H26V24H8z" fill="#ffc61a" stroke="#f08000" strokeWidth="4" /><path d="M8 34H26V52H8z" fill="#ee4a12" stroke="#c22000" strokeWidth="4" /><path d="M34 20H60M34 46H60" stroke="#9c9c9c" strokeWidth="7" /></Svg>],
];

const Btn = ({ children, className = "", spread = false }: P & { spread?: boolean }) => (
  <button className={`flex shrink-0 items-center rounded-[3px] border border-[#adadad] bg-gradient-to-b from-[#fdfdfd] to-[#ebebeb] ${spread ? "justify-between" : "justify-center"} ${className}`}>{children}</button>
);

const SpinArrows = ({ className = "" }: { className?: string }) => (
  <span className={`flex h-full shrink-0 flex-col items-center justify-center gap-1 rounded-r-[3px] border-l border-[#b4b4b4] ${className}`}>
    <Caret up w={8} /><Caret w={8} />
  </span>
);

const classes = [
  ["#fff5f0", "1,164000 - 1,357000", "1,164 - 1,357"],
  ["#fcbea5", "1,357000 - 1,361000", "1,357 - 1,361"],
  ["#fb7050", "1,361000 - 16,770000", "1,361 - 16,77"],
  ["#d32020", "16,770000 - 35,978000", "16,77 - 35,978"],
  ["#67000d", "35,978000 - 872,553000", "35,978 - 872,553"],
];

const Field = ({ label, children, className = "" }: P & { label: string }) => (
  <div className={`flex items-center ${className}`}>
    <span className="w-[88px] shrink-0 pt-px tracking-[-0.250px] whitespace-nowrap">{label}</span>
    {children}
  </div>
);

const Dialog = () => (
  <div className="absolute top-[30px] left-[444px] flex h-[952px] w-[1033px] flex-col overflow-hidden rounded-[9px] border border-[#640a80] bg-[#f0f0f0] shadow-[0_14px_34px_rgba(0,0,0,0.48)]">
    <div className="flex h-[37px] shrink-0 items-center bg-[#68007f] pl-[9px] text-[14.100px] text-[#f4eaf6]">
      <QLogo s={21} dim />
      <span className="ml-1 flex-1">Layer Properties - Peta_Tematik — Symbology</span>
      <svg width="12" height="12" viewBox="0 0 12 12" className="mr-[15px] mb-px"><path d="M.5.5L11.500 11.500M11.500.5L.5 11.500" stroke="#fff" strokeWidth="1.200" /></svg>
    </div>
    <div className="flex min-h-0 flex-1">
      <div className="flex w-[188px] shrink-0 flex-col bg-[#5c5c5c]">
        <div className="flex h-[27px] shrink-0 items-center rounded-sm border border-[#b4b4b4] bg-white pl-[10px]">
          <svg width="16" height="16" viewBox="0 0 16 16"><circle cx="6.500" cy="6.500" r="5.300" fill="none" stroke="#8a8a8a" strokeWidth="1.500" /><path d="M10.500 10.500L15 15" stroke="#8a8a8a" strokeWidth="2" /></svg>
        </div>
        <div className="mt-2 flex min-h-0 flex-1">
          <div className="flex flex-1 flex-col overflow-hidden text-[14px] text-[#f2f2f2]">
            {side.map(([t, ic]) => (
              <div key={t} className={`flex h-[45px] shrink-0 items-center ${t === "Symbology" ? "bg-[#f0f0f0] pl-[9px] text-black" : "pl-[6px]"}`}>
                {ic}
                <span className="ml-[8.500px] pt-[2px] whitespace-nowrap">{t}</span>
              </div>
            ))}
          </div>
          <div className="flex w-[18px] shrink-0 flex-col bg-gradient-to-r from-white to-[#f0f0f0]">
            <div className="flex h-[17px] items-center justify-center border-b border-[#c4c4c4]"><Caret up w={9} /></div>
            <div className="flex-1" />
            <div className="h-[115px] border-y border-[#b9b9b9] bg-[#e6e6e6]" />
            <div className="flex h-[18px] items-center justify-center bg-[#fafafa]"><Caret w={9} /></div>
          </div>
        </div>
      </div>
      <svg width="5" height="22" viewBox="0 0 5 22" className="mt-[447px] shrink-0"><path d="M3 1V22" stroke="#b0b0b0" strokeDasharray="1.300 2.700" /></svg>
      <div className="flex w-[835px] shrink-0 flex-col pt-1 text-[12.100px]">
        <Btn spread className="h-[30px] pr-[8px] pl-2">
          <span className="flex items-center gap-[5px]">
            <svg width="17" height="18" viewBox="0 0 17 18"><path d="M.5.5H13.500V4.500H.5z" fill="#ffc61a" stroke="#f59a00" /><path d="M3.500 6.500H16.500V10.500H3.500z" fill="#f9520e" stroke="#d93a00" /><path d="M.5 13H13.500V17H.5z" fill="#ad1004" stroke="#7a0a02" /></svg>
            <span className="pt-px">Graduated</span>
          </span>
          <Caret w={9} />
        </Btn>
        <Field label="Value" className="mt-[7px] h-[30px]">
          <div className="flex h-[30px] w-[709px] items-center rounded-[3px] border border-[#adadad] bg-white pl-1">
            <b className="text-[12px] text-[#555]">1.2</b>
            <span className="ml-2 flex-1 pt-px">kepadatan</span>
            <span className="flex h-full w-[28px] items-center justify-center rounded-r bg-gradient-to-b from-white to-[#ebebeb]"><Caret w={9} /></span>
          </div>
          <Btn className="ml-2 h-[30px] w-[30px]"><Svg s={16} v={96}><Eps /></Svg></Btn>
        </Field>
        <Field label="Symbol" className="mt-2 h-[31px]">
          <Btn className="h-[31px] w-[731px]"><span className="ml-px h-[24px] w-[720px] border border-[#222] bg-[#85b66f]" /></Btn>
          <Btn className="ml-px h-[31px] w-[15px]"><Caret w={9} /></Btn>
        </Field>
        <Field label="Legend format" className="mt-2 h-[27px]">
          <div className="flex h-[27px] w-[574px] items-center rounded-sm border border-[#adadad] bg-white pl-[3px] text-[12.600px] [word-spacing:1.300px]">%1 - %2</div>
          <div className="ml-2 flex h-[26px] w-[100px] items-center justify-between rounded-[3px] border border-[#adadad] bg-white pl-1"><span className="tracking-[-0.100px] whitespace-nowrap">Precision 4</span><SpinArrows className="w-[18px]" /></div>
          <Check className="ml-[7px]" /><span className="ml-[7px]">Trim</span>
        </Field>
        <Field label="Color ramp" className="mt-2 h-[27px]">
          <Btn className="h-[27px] w-[731px]"><span className="h-5 w-[719px] bg-[linear-gradient(90deg,#fff5f0_0%,#fee0d2_13%,#fcbba1_26%,#fc9272_39%,#fb6a4a_52%,#ef3b2c_65%,#cb181d_78%,#a50f15_90%,#67000d_100%)]" /></Btn>
          <Btn className="ml-px h-[27px] w-[15px]"><Caret w={9} /></Btn>
        </Field>
        <div className="mt-2 flex h-[29px] items-end">
          <span className="z-10 flex h-[29px] w-[72px] items-center justify-center rounded-t-sm border border-b-0 border-[#bdbdbd] bg-[#fbfbfb]">Classes</span>
          <span className="mb-px flex h-[27px] w-[86px] items-center justify-center rounded-t-sm border border-b-2 border-l-0 border-[#bdbdbd] bg-[#e8e8e8] pt-[4px]">Histogram</span>
          <span className="mb-px h-[2px] flex-1 bg-[#bdbdbd]" />
        </div>
        <div className="mt-[13px] flex h-[497px] shrink-0 flex-col border-r border-b border-[#b4b4b4] bg-white pl-px text-[14px]">
          <div className="flex h-6 shrink-0 items-center border-b border-[#adadad] bg-gradient-to-b from-white to-[#ececec]">
            <span className="flex h-full w-[86px] items-center justify-between border-r border-[#c8c8c8] pt-[4px] pr-[6px] pl-[2px]">Symbol<Caret w={9} className="mb-2" /></span>
            <span className="flex h-full w-[166px] items-center border-r border-[#c8c8c8] pt-[4px] pl-[3px]">Values</span>
            <span className="pt-[4px] pl-[3px]">Legend</span>
          </div>
          {classes.map(([c, v, l]) => (
            <div key={v} className="flex h-[22.500px] shrink-0 items-center pt-px tracking-[0.02px] whitespace-nowrap [word-spacing:1.100px]">
              <Check className="ml-1" />
              <span className="ml-2 h-5 w-5 border border-[#333]" style={{ background: c }} />
              <span className="ml-[41px] w-[166px] pt-px">{v}</span>
              <span className="pt-px">{l}</span>
            </div>
          ))}
        </div>
        <div className="mt-2 flex h-[30px] items-center">
          <span className="w-[37px] pt-px">Mode</span>
          <Btn spread className="h-[30px] w-[187px] pr-2 pl-[7px]">
            <span className="flex items-center gap-[3px] tracking-[-0.120px] whitespace-nowrap">
              <svg width="20" height="20" viewBox="0 0 20 20" className="shrink-0"><path d="M2.500.7H18V19.300H2.500zM8 .7V19.300M12.500.7V19.300" fill="#f6f4e6" stroke="#d8be20" strokeWidth="1.200" /><path d="M1 2V18M4 2V18M16 2V18M19 2V18" stroke="#8aa6c4" /><path d="M2.500 3V18M10.200 3V18M17.500 3V18" stroke="#222" strokeWidth="2.600" strokeDasharray="2.600 2" /></svg>
              <span className="pt-[2px]">Equal Count (Quantile)</span>
            </span>
            <Caret w={10} />
          </Btn>
          <span className="flex-1" />
          <span className="mr-2 pt-px">Classes</span>
          <div className="flex h-[25px] w-[84px] items-center justify-between rounded-[3px] border border-[#adadad] bg-white pl-[6px]">5<SpinArrows className="w-[18px] bg-[#f4f4f4]" /></div>
        </div>
        <div className="mt-2 flex h-[30px] items-center">
          <button className="h-[26px] w-[100px] rounded-[3px] border border-[#4aa3f5] bg-gradient-to-b from-[#f6fafd] to-[#e2e9f0]">Classify</button>
          <Btn className="ml-[7px] h-[30px] w-[35px]"><svg width="18" height="18" viewBox="0 0 18 18"><path d="M6 .7H12V6H17.300V12H12V17.300H6V12H.7V6H6z" fill="#fff" stroke="#4f8a53" strokeWidth="1.300" /><path d="M9 3V15M3 9H15" stroke="#5d9a61" strokeWidth="2.600" /></svg></Btn>
          <Btn className="ml-2 h-[30px] w-[35px]"><svg width="18" height="9" viewBox="0 0 18 9"><path d="M.7.7H17.300V8.300H.7z" fill="#fff" stroke="#e8656c" strokeWidth="1.300" /><path d="M3 4.500H15" stroke="#ee5a63" strokeWidth="3" /></svg></Btn>
          <Btn className="ml-[7px] h-[26px] w-[100px]">Delete All</Btn>
          <span className="flex-1" />
          <Btn spread className="h-[26px] w-[100px] pr-[7px] pl-[14px]">Advanced<Caret w={6} className="mb-1" /></Btn>
        </div>
        <div className="mt-[10px] flex h-[17px] items-center"><Check /><span className="ml-[6px] pt-px tracking-[-0.160px]">Link class boundaries</span></div>
        <div className="mt-6 flex h-[19px] items-center pl-[5px] text-[12.600px]">
          <svg width="10" height="14" viewBox="0 0 10 14"><path d="M1 1L9 7L1 13z" fill="#555" stroke="#222" /></svg>
          <b className="ml-3">Layer Rendering</b>
        </div>
        <div className="mt-[10px] flex h-[26px]">
          <Btn spread className="w-[100px] pt-px pr-[7px] pl-[28px]">Style<Caret w={6} className="mb-1" /></Btn>
          <span className="flex-1" />
          <div className="flex gap-[7.600px]">
            {["OK", "Cancel", "Apply", "Help"].map((t) => <Btn key={t} className="w-[100px] pt-px">{t}</Btn>)}
          </div>
        </div>
      </div>
    </div>
  </div>
);

/* ---------- main window ---------- */

const Slot = ({ children, on = false }: { children: React.ReactNode; on?: boolean }) => (
  <span className={`flex h-10 w-[41.330px] shrink-0 items-center justify-center ${on ? "rounded-[3px] border border-[#b4b4b4] bg-[#dcdcdc]" : ""}`}>{children}</span>
);
const Bar = ({ children, className = "" }: P) => (
  <div className={`flex shrink-0 items-center border-b border-[#b4b4b4] bg-gradient-to-b from-[#fbfbfb] to-[#ededed] pl-[6px] ${className}`}>{children}</div>
);

const menus = [
  ["", "Project", "", "ml-[13px] w-[64px]"], ["E", "", "dit", "w-[44px]"], ["V", "", "iew", "w-[49px]"], ["L", "", "ayer", "w-[53px]"],
  ["S", "", "ettings", "w-[71px]"], ["P", "", "lugins", "w-[67px]"], ["", "Vect", "", "w-[59px]"], ["R", "", "aster", ""],
];

const StatusBox = ({ children, className = "" }: P) => (
  <div className={`flex shrink-0 items-center rounded-[3px] border border-[#adadad] ${className}`}>{children}</div>
);

export default function App() {
  return (
    <div className="relative flex h-[1018px] w-[1919px] flex-col overflow-hidden bg-[#f0f0f0] font-['Noto_Sans',sans-serif] text-[14px] leading-[18px] text-black">
      <div className="flex h-[29px] shrink-0 items-center bg-[#f3f3f3] pl-[2px] text-[#8a8a8a]">
        <QLogo s={20} />
        <span className="ml-[6px] flex-1 tracking-[0.050px]">*Untitled Project — QGIS</span>
        <span className="flex items-center gap-[46.500px] pr-[25px] pb-px">
          <svg width="12" height="12" viewBox="0 0 12 12"><path d="M0 5.500H12" stroke="#8a8a8a" /></svg>
          <svg width="12" height="12" viewBox="0 0 12 12"><rect x=".6" y="2.600" width="8.800" height="8.800" rx="1.500" fill="none" stroke="#8a8a8a" strokeWidth="1.200" /><path d="M3 .6H9.500Q11.400.6 11.400 2.500V9" fill="none" stroke="#8a8a8a" strokeWidth="1.200" /></svg>
          <svg width="12" height="12" viewBox="0 0 12 12"><path d="M.5.5L11.500 11.500M11.500.5L.5 11.500" stroke="#8a8a8a" strokeWidth="1.200" /></svg>
        </span>
      </div>
      <div className="flex h-[26px] shrink-0 items-center border-b-2 border-[#d8d8d8] pt-px text-[#9a9a9a]">
        {menus.map(([u, a, b, c]) => (
          <span key={u + a} className={`shrink-0 ${c}`}>
            <u className="underline-offset-2">{u}</u>{a}{a === "Vect" ? <><u className="underline-offset-2">o</u>r</> : b}
          </span>
        ))}
      </div>
      <Bar className="h-[48px]">
        <Grip className="mr-[3px]" />
        <Slot><NewI /></Slot><Slot><OpenI /></Slot><Slot><SaveI /></Slot><Slot><LayoutNewI /></Slot><Slot><LayoutMgrI /></Slot><Slot><StyleI /></Slot>
        <Grip className="mr-2 ml-[10px]" />
        <span className="-ml-1 flex"><Slot on><HandI /></Slot><Slot><PanSelI /></Slot><Slot><ZoomI plus /></Slot><Slot><ZoomI /></Slot></span>
        <span className="ml-auto flex w-[445px] items-center">
          <Caret w={9} />
          <span className="ml-[9px]"><Svg><Bubble /><path d="M40 48L24 66" stroke="#c9a30c" strokeWidth="4" /><circle cx="22" cy="70" r="13" fill="#84b884" stroke="#3d5c3d" strokeWidth="4" /></Svg></span>
          <span className="ml-[11px]"><Svg><Gear x={0} y={0} k={0.85} /><path d="M52 48L60 84L68 75L78 88L85 82L75 70L88 68z" fill="#fff" stroke="#444" strokeWidth="3" /></Svg></span>
          <Caret w={9} className="ml-[8px]" />
        </span>
      </Bar>
      <Bar className="h-[49px]">
        <Grip className="mr-[3px]" />
        <Slot><AddLayerI /></Slot><Slot><PackI /></Slot><Slot><VShape /></Slot><Slot><FeatherI /></Slot><Slot><Chip /></Slot><Slot><MeshI /></Slot><Slot><VShape box /></Slot>
        <Grip className="mr-1 ml-[10px]" />
        <Slot><PencilsI /></Slot><Slot on><EditI /></Slot><Slot><SaveEditI /></Slot>
        <span className="ml-auto w-[425px]"><Grip /></span>
      </Bar>
      <Bar className="h-[48px] border-b-2 pt-px">
        <Grip className="mr-[3px]" />
        <Slot><TagI t="KML" b={<Plus />} /></Slot><Slot><TagI t="KMZ" b={<ExportBadge />} /></Slot><Slot><TagI t="HTML" b={<Star />} /></Slot><Slot><SquaresI /></Slot><Slot><MapI /></Slot>
      </Bar>
      <div className="flex min-h-0 flex-1">
        <div className="flex w-[367px] shrink-0 flex-col">
          <Browser />
          <Layers />
        </div>
        <div className="flex w-[9px] shrink-0 items-center justify-center">
          <Grip />
        </div>
        <div className="flex min-w-0 flex-1 flex-col border-b border-[#b4b4b4] pt-[2px]">
          <div className="flex h-[35px] shrink-0 items-center border border-[#a9b89f] bg-[#dcefd6] pl-[12px] text-[13px]">
            <svg width="30" height="22" viewBox="0 0 90 66" className="mb-[2px]"><path d="M3 14L26 34L86 3L22 62z" fill="#2fe02a" stroke="#1b6e1b" strokeWidth="4" /></svg>
            <b className="ml-[11px] flex-1">La</b>
            <i className="mr-[25px] text-[12.700px]">1 more</i>
            <svg width="22" height="22" viewBox="0 0 22 22" className="mb-[3px]"><circle cx="11" cy="11" r="10.800" fill="#36413f" /><path d="M6.500 6.500L15.500 15.500M15.500 6.500L6.500 15.500" stroke="#fff" strokeWidth="3" /></svg>
            <Caret w={9} className="mr-[13px] mb-[3px] ml-[5px]" />
          </div>
          <MapCanvas />
        </div>
      </div>
      <div className="flex h-[33px] shrink-0 items-center pt-px pl-[5px]">
        <StatusBox className="h-[27px] w-[250px] bg-white pl-[11px] text-[13.500px] text-[#8a8a8a]">
          <svg width="16" height="16" viewBox="0 0 16 16" className="mr-[9px]"><circle cx="6.500" cy="6.500" r="5.300" fill="none" stroke="#8a8a8a" strokeWidth="1.400" /><path d="M10.500 10.500L15 15" stroke="#8a8a8a" strokeWidth="2" /></svg>
          Type to locate (Ctrl+K)
        </StatusBox>
        <span className="ml-[10px] w-[654px] shrink-0 pt-px text-[13px]">Toggles the editing state of the current layer</span>
        <span className="w-[70px] shrink-0 pt-px text-[12.800px]">Coordinate</span>
        <StatusBox className="h-[27px] w-[138px] pt-px pl-2 text-[13.300px] whitespace-pre">11631687  -877206</StatusBox>
        <svg width="20" height="20" viewBox="0 0 20 20" className="ml-[5px] shrink-0"><ellipse cx="7" cy="8" rx="5" ry="8" transform="rotate(-30 7 8)" fill="#222" /><path d="M3 5L9 3M4 9L11 6M8 13L12 10" stroke="#ddd" /><circle cx="12" cy="15" r="4" fill="#ddd" stroke="#222" /><circle cx="12" cy="15" r="1.500" fill="#222" /><path d="M13 6L18 1" stroke="#222" strokeDasharray="2 1.500" /></svg>
        <span className="ml-[17px] w-[36px] shrink-0 text-[12.800px]">Scale</span>
        <StatusBox className="h-[27px] w-[96px] whitespace-nowrap">
          <span className="flex-1 pt-px text-[13px]">1:4245103</span>
          <span className="flex h-full w-[25px] items-center justify-center border-l border-[#adadad]"><Caret w={9} /></span>
        </StatusBox>
        <svg width="16" height="20" viewBox="0 0 16 20" className="ml-[15px] shrink-0"><path d="M3.500 9V5.500Q3.500 1.500 8 1.500T12.500 5.500V9" fill="none" stroke="#777" strokeWidth="2" /><rect x=".5" y="8.500" width="15" height="11" rx="1.500" fill="#555" /></svg>
        <span className="ml-[11px] w-[60px] shrink-0 pt-px text-[12.400px]">Magnifier</span>
        <StatusBox className="h-[25px] w-[100px] justify-between bg-white/60 pl-[5px] text-[13.300px]">100%<SpinArrows className="w-[18px]" /></StatusBox>
        <span className="ml-3 w-[63px] shrink-0 pt-px text-[12.800px]">Rotation</span>
        <StatusBox className="h-[25px] w-[100px] justify-between bg-white pl-[5px] text-[13.300px]">0,0 °<SpinArrows className="w-[18px] bg-[#f4f4f4]" /></StatusBox>
        <Check className="ml-2" />
        <span className="ml-[7px] w-[63px] shrink-0 pt-px text-[13px]">Render</span>
        <svg width="20" height="18" viewBox="0 0 20 18" className="shrink-0"><ellipse cx="10" cy="9" rx="9.500" ry="8.500" fill="#777" /><path d="M0 9H20M2 5H18M2 13H18M10 0V18M6 1Q2 9 6 17M14 1Q18 9 14 17" stroke="#eee" fill="none" strokeWidth=".9" /></svg>
        <span className="ml-[2px] pt-px text-[13.200px]">EPSG:3857</span>
        <svg width="20" height="19" viewBox="0 0 20 19" className="mr-2 ml-auto"><path d="M10 .5C15.500.5 19.500 3.500 19.500 7.500Q19.500 11.500 15.500 13.500L18.500 18.500L11 15C4 15.500.5 12 .5 7.500C.5 3.500 4.500.5 10 .5z" fill="#6a6a6a" /><path d="M5 8H7M9 8H11M13 8H15" stroke="#fff" strokeWidth="2" /></svg>
      </div>
      <Dialog />
    </div>
  );
}
